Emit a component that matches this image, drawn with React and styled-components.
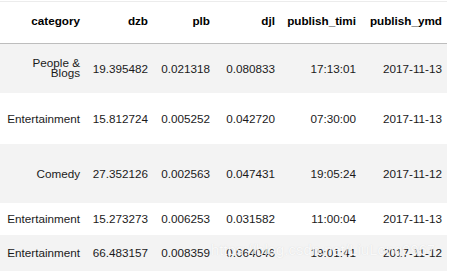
import React from "react";
import styled, { createGlobalStyle } from "styled-components";

const Global = createGlobalStyle`
  html, body { margin: 0; padding: 0; background: #fff; }
  body { font-family: "Liberation Sans", Arial, sans-serif; }
`;

const Frame = styled.div`
  position: relative;
  width: 459px;
  height: 271px;
  overflow: hidden;
  padding-top: 1px;
  box-sizing: border-box;
`;

const Table = styled.table`
  width: 447px;
  border-collapse: collapse;
  table-layout: fixed;
  border-top: 1px solid #ececec;
  font-size: 11.7px;
  color: #1a1a1a;
`;

const Col = styled.col``;

const HeadRow = styled.tr`
  height: 42px;
  border-bottom: 1px solid #bdbdbd;
`;

const Th = styled.th`
  font-weight: bold;
  text-align: right;
  padding: 0 5px 4px 0;
  color: #000;
  white-space: nowrap;
`;

const Row = styled.tr`
  height: ${(p) => p.$h}px;
  background: ${(p) => (p.$alt ? "#f3f3f3" : "#ffffff")};
`;

const Td = styled.td`
  text-align: right;
  padding: 0 5px 0 0;
  white-space: nowrap;
  line-height: ${(p) => (p.$tight ? "10px" : "normal")};
`;

const Watermark = styled.div`
  position: absolute;
  left: 211px;
  top: 242px;
  font-size: 14.5px;
  color: rgba(255, 255, 255, 0.85);
  text-shadow: 0 0 1px rgba(160, 160, 160, 0.35);
  white-space: nowrap;
  letter-spacing: 0.2px;
`;

const widths = [85, 68, 62, 65, 81, 86];
const headers = ["category", "dzb", "plb", "djl", "publish_timi", "publish_ymd"];

const rows = [
  { h: 49, cat: ["People &", "Blogs"], v: ["19.395482", "0.021318", "0.080833", "17:13:01", "2017-11-13"] },
  { h: 51, cat: ["Entertainment"], v: ["15.812724", "0.005252", "0.042720", "07:30:00", "2017-11-13"] },
  { h: 59, cat: ["Comedy"], v: ["27.352126", "0.002563", "0.047431", "19:05:24", "2017-11-12"] },
  { h: 32, cat: ["Entertainment"], v: ["15.273273", "0.006253", "0.031582", "11:00:04", "2017-11-13"] },
  { h: 36, cat: ["Entertainment"], v: ["66.483157", "0.008359", "0.064046", "19:01:41", "2017-11-12"] },
];

export default function App() {
  return (
    <>
      <Global />
      <Frame>
        <Table>
          <colgroup>
            {widths.map((w, i) => (
              <Col key={i} style={{ width: w }} />
            ))}
          </colgroup>
          <thead>
            <HeadRow>
              {headers.map((h) => (
                <Th key={h}>{h}</Th>
              ))}
            </HeadRow>
          </thead>
          <tbody>
            {rows.map((r, i) => (
              <Row key={i} $h={r.h} $alt={i % 2 === 0}>
                <Td $tight={r.cat.length > 1}>
                  {r.cat.map((c, j) => (
                    <React.Fragment key={j}>
                      {j > 0 && <br />}
                      {c}
                    </React.Fragment>
                  ))}
                </Td>
                {r.v.map((v, j) => (
                  <Td key={j}>{v}</Td>
                ))}
              </Row>
            ))}
          </tbody>
        </Table>
        <Watermark>https://blog.csdn.net/LiuLong0967</Watermark>
      </Frame>
    </>
  );
}
